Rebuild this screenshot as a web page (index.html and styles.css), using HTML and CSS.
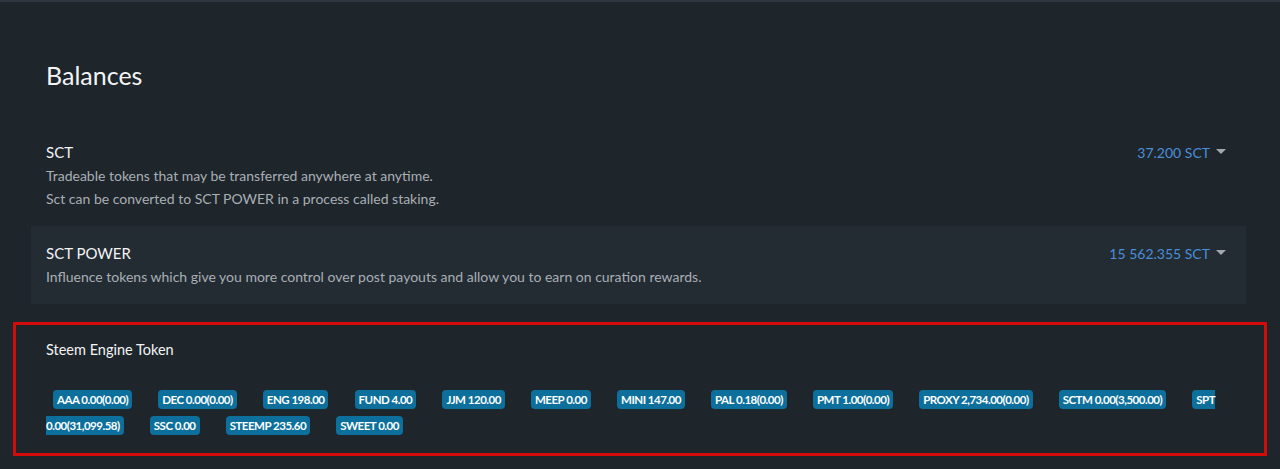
FILE: index.html
```html
<!DOCTYPE html>
<html lang="en">
<head>
  <meta charset="UTF-8">
  <meta name="viewport" content="width=device-width, initial-scale=1.0">
  <title>Balances</title>
  <link rel="stylesheet" href="styles.css">
</head>
<body>

<div class="top-bar"></div>

<section class="wallet">
  <h2 class="wallet-title">Balances</h2>

  <!-- SCT -->
  <div class="balance-row">
    <div class="balance-info">
      <div class="balance-name">SCT</div>
      <div class="balance-desc">Tradeable tokens that may be transferred anywhere at anytime.</div>
      <div class="balance-desc">Sct can be converted to SCT POWER in a process called staking.</div>
    </div>
    <div class="balance-value"><a href="#" class="dropdown-toggle">37.200 SCT</a></div>
  </div>

  <!-- SCT POWER -->
  <div class="balance-row row-alt">
    <div class="balance-info">
      <div class="balance-name">SCT POWER</div>
      <div class="balance-desc">Influence tokens which give you more control over post payouts and allow you to earn on curation rewards.</div>
    </div>
    <div class="balance-value"><a href="#" class="dropdown-toggle">15 562.355 SCT</a></div>
  </div>

  <!-- Steem Engine -->
  <div class="engine-box">
    <div class="balance-name">Steem Engine Token</div>
    <div class="token-list">
      <span class="token">AAA 0.00(0.00)</span>
      <span class="token">DEC 0.00(0.00)</span>
      <span class="token">ENG 198.00</span>
      <span class="token">FUND 4.00</span>
      <span class="token">JJM 120.00</span>
      <span class="token">MEEP 0.00</span>
      <span class="token">MINI 147.00</span>
      <span class="token">PAL 0.18(0.00)</span>
      <span class="token">PMT 1.00(0.00)</span>
      <span class="token">PROXY 2,734.00(0.00)</span>
      <span class="token">SCTM 0.00(3,500.00)</span>
      <span class="token">SPT 0.00(31,099.58)</span>
      <span class="token">SSC 0.00</span>
      <span class="token">STEEMP 235.60</span>
      <span class="token">SWEET 0.00</span>
    </div>
  </div>
</section>

</body>
</html>
```

FILE: styles.css
```css
/* BASE */
* {
  box-sizing: border-box;
  font-family: Lato, "Noto Sans", sans-serif;
}
body {
  margin: 0;
  padding: 0;
  color: #f2f4f6;
  background-color: #1e252b;
  overflow: hidden;
}
a {
  text-decoration: none;
}

.top-bar {
  height: 2px;
  background-color: #2e3640;
}

/* LAYOUT */
.wallet {
  width: 1215px;
  margin-left: 31px;
  padding-top: 58px;
}
.wallet-title {
  margin: 0 0 35px 15px;
  font-size: 25px;
  font-weight: normal;
  line-height: 30px;
}

/* ROWS */
.balance-row {
  display: flex;
  justify-content: space-between;
  padding: 16px 20px 16px 15px;
}
.row-alt {
  background-color: #232b33;
}
.balance-name {
  font-size: 15px;
  line-height: 23px;
  color: #f2f4f6;
}
.balance-desc {
  font-size: 14px;
  line-height: 23px;
  color: #a9afb5;
}
.balance-value {
  font-size: 14px;
  line-height: 23px;
}
.dropdown-toggle {
  color: #4a8fd8;
}
.dropdown-toggle::after {
  content: "";
  display: inline-block;
  margin-left: 6px;
  vertical-align: 4px;
  border-top: 5px solid #a3a8ad;
  border-left: 5px solid transparent;
  border-right: 5px solid transparent;
}

/* STEEM ENGINE */
.engine-box {
  width: 1254px;
  margin: 18px 0 0 -18px;
  border: 3px solid #d40b0b;
  padding: 13px 30px 15px;
}
.engine-box .balance-name {
  font-size: 14.5px;
}
.token-list {
  margin-top: 25px;
  line-height: 24px;
}
.token {
  background-color: #0d6f9b;
  color: #fff;
  font-size: 11.5px;
  font-weight: bold;
  letter-spacing: -0.5px;
  padding: 3px 4px;
  border-radius: 4px;
  margin: 0 15px 0 7px;
}
```
